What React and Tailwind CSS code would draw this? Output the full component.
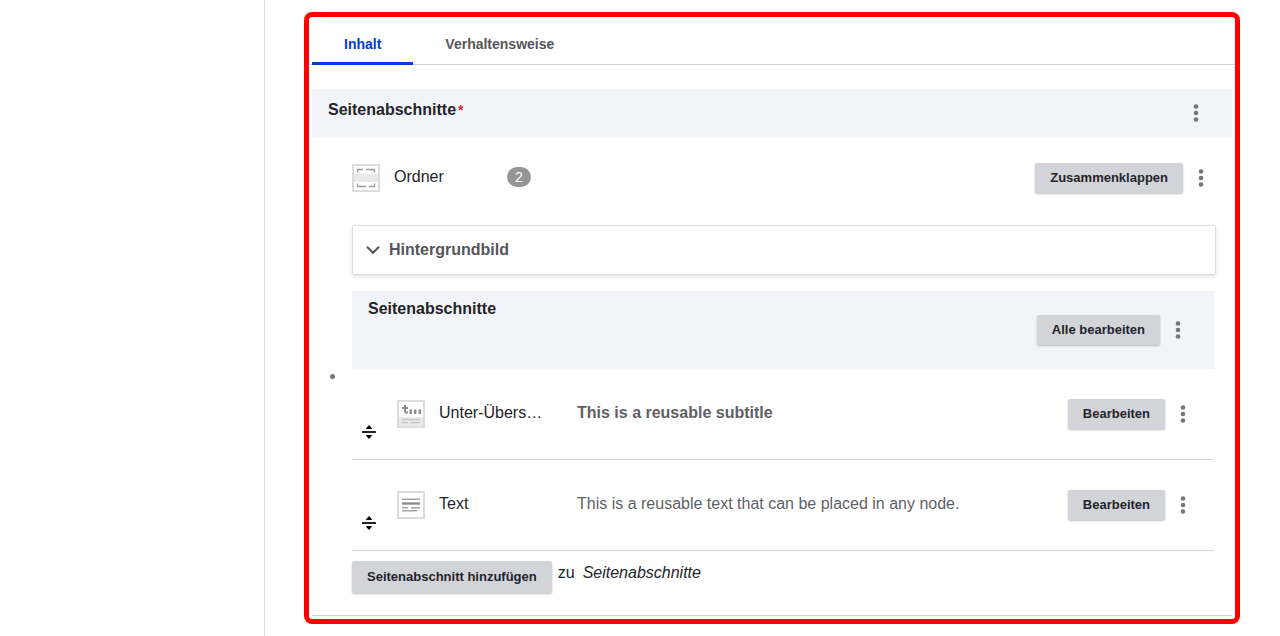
import React from "react";

function Kebab({ label }) {
  return (
    <button
      type="button"
      aria-label={label}
      className="flex h-8 w-9 shrink-0 items-center justify-center text-[#75757a]"
    >
      <svg width="6" height="20" viewBox="0 0 6 20" fill="currentColor">
        <circle cx="3" cy="3.5" r="2.3" />
        <circle cx="3" cy="10" r="2.3" />
        <circle cx="3" cy="16.5" r="2.3" />
      </svg>
    </button>
  );
}

function Button({ children }) {
  return (
    <button
      type="button"
      className="h-[30px] shrink-0 rounded-xs bg-[#d3d4d9] px-[15px] text-[13px] leading-4 font-bold text-[#232429] shadow-[0_1px_2px_rgba(0,0,0,0.25)]"
    >
      {children}
    </button>
  );
}

function FolderIcon() {
  return (
    <svg width="28" height="28" viewBox="0 0 28 28" className="shrink-0" fill="none">
      <rect x="1" y="1" width="26" height="26" fill="#fff" stroke="#dcdcdc" strokeWidth="2" />
      <rect x="2" y="10" width="24" height="8" fill="#e9e9e9" />
      <path
        d="M5.5 8.5V5.5H11M14 5.5H22.5V8.5M5.5 19.5V22.5H14M17 22.5H22.5V19.5"
        stroke="#9a9a9a"
        strokeWidth="1.3"
      />
    </svg>
  );
}

function SubtitleIcon() {
  return (
    <svg width="28" height="28" viewBox="0 0 28 28" className="shrink-0" fill="none">
      <rect x="1" y="1" width="26" height="26" fill="#fff" stroke="#dcdcdc" strokeWidth="2" />
      <rect x="2" y="17" width="24" height="9" fill="#e9e9e9" />
      <path d="M8 5V11.2Q8 12.5 9.5 12.5H11M5 8H11" stroke="#8c8c8c" strokeWidth="2" />
      <path d="M13.8 9.5V14M18.2 9.5V14M22.8 9.5V14" stroke="#8c8c8c" strokeWidth="2.4" />
      <path d="M5 19.6H23M5 22.6H11M14 22.6H23" stroke="#c4c4c4" strokeWidth="1.3" />
    </svg>
  );
}

function TextIcon() {
  return (
    <svg width="28" height="28" viewBox="0 0 28 28" className="shrink-0" fill="none">
      <rect x="1" y="1" width="26" height="26" fill="#fff" stroke="#dcdcdc" strokeWidth="2" />
      <path d="M5 8.2H23M5 16.8H11M14 16.8H23M5 19.8H20" stroke="#a3a3a3" strokeWidth="1.4" />
      <path d="M5 12.5H23" stroke="#8c8c8c" strokeWidth="2.4" />
    </svg>
  );
}

function DragHandle() {
  return (
    <a href="#drag" aria-label="Verschieben" className="mt-14 ml-[10px] block w-[14px] shrink-0">
      <svg width="14" height="14" viewBox="0 0 14 14">
        <path d="M0.5 7H13.5" stroke="#222" strokeWidth="1.8" strokeLinecap="round" />
        <path d="M4 3.4L6.3 0.7Q7 0 7.7 0.7L10 3.4Q10 4 9.4 4H4.6Q4 4 4 3.4Z" />
        <path d="M4 10.6L6.3 13.3Q7 14 7.7 13.3L10 10.6Q10 10 9.4 10H4.6Q4 10 4 10.6Z" />
      </svg>
    </a>
  );
}

function ParagraphRow({ icon, title, summary, bold }) {
  return (
    <li className="mr-[18px] flex h-[91px] items-start border-b border-[#d3d4d9]">
      <DragHandle />
      <div className="flex min-w-0 flex-1 items-center pt-[29px] pr-[13px] pl-[21px]">
        {icon}
        <span className="ml-[14px] w-[138px] shrink-0 pb-[2px]">{title}</span>
        <span
          className={
            bold
              ? "min-w-0 flex-1 truncate pb-[2px] font-bold text-[#5f5f66]"
              : "min-w-0 flex-1 truncate pb-[2px] text-[#5f5f66]"
          }
        >
          {summary}
        </span>
        <Button>Bearbeiten</Button>
        <Kebab label="Weitere Aktionen" />
      </div>
    </li>
  );
}

export default function App() {
  return (
    <div className="flex min-h-screen bg-white font-['Liberation_Sans',Arial,sans-serif] text-base leading-6 text-[#232429]">
      <aside className="w-[265px] shrink-0 border-r border-[#d9dbe8]" />
      <main className="min-w-0 flex-1 py-3 pr-10 pl-[39px]">
        <div className="rounded-lg border-5 border-[#ff0000]">
          <nav className="flex h-12 border-b border-[#d3d4d9] pl-[3px] text-sm font-bold">
            <a
              href="#inhalt"
              className="-mb-px flex items-center border-b-3 border-[#003ecc] px-8 pt-2 text-[#003ecc]"
            >
              Inhalt
            </a>
            <a href="#verhaltensweise" className="flex items-center px-8 pt-[6px] text-[#55565b]">
              Verhaltensweise
            </a>
          </nav>

          <section className="mx-[3px] mt-6 mb-[3px] border-b border-[#d3d4d9]">
            <header className="flex h-12 items-center justify-between bg-[#f3f4f9] pr-[18px] pl-4">
              <h4 className="pb-[6px] font-bold">
                Seitenabschnitte
                <span className="ml-[2px] text-sm text-[#dc2323]">*</span>
              </h4>
              <Kebab label="Aktionen" />
            </header>

            <div className="flex items-center">
              <div className="flex w-10 shrink-0 justify-center">
                <span className="size-[5px] rounded-full bg-[#75757a]" />
              </div>
              <div className="min-w-0 flex-1">
                <div className="flex h-[88px] items-center pr-[13px] pb-[6px]">
                  <FolderIcon />
                  <span className="ml-[14px] w-[113px] shrink-0 pb-[2px]">Ordner</span>
                  <span className="mb-[2px] rounded-full bg-[#969696] px-2 text-center text-sm leading-5 text-white">
                    2
                  </span>
                  <div className="ml-auto flex items-center">
                    <Button>Zusammenklappen</Button>
                    <Kebab label="Weitere Aktionen" />
                  </div>
                </div>

                <details className="mr-4 rounded-xs border border-[#dcdde3] shadow-[0_2px_4px_rgba(0,0,0,0.1)]">
                  <summary className="flex h-12 list-none items-center gap-[9px] pl-[13px] font-bold text-[#55565b]">
                    <svg width="14" height="10" viewBox="0 0 14 10" fill="none">
                      <path d="M1 1.8L7 7.8L13 1.8" stroke="currentColor" strokeWidth="2" />
                    </svg>
                    Hintergrundbild
                  </summary>
                </details>

                <header className="mt-4 mr-[18px] flex h-[78px] items-center justify-between bg-[#f3f4f9] pr-[18px] pl-4">
                  <h4 className="self-start pt-[6px] font-bold">Seitenabschnitte</h4>
                  <div className="flex items-center">
                    <Button>Alle bearbeiten</Button>
                    <Kebab label="Aktionen" />
                  </div>
                </header>

                <ul>
                  <ParagraphRow
                    icon={<SubtitleIcon />}
                    title="Unter-Übers…"
                    summary="This is a reusable subtitle"
                    bold
                  />
                  <ParagraphRow
                    icon={<TextIcon />}
                    title="Text"
                    summary="This is a reusable text that can be placed in any node."
                  />
                </ul>

                <div className="flex h-16 items-start pt-[10px]">
                  <button
                    type="button"
                    className="h-8 rounded-xs bg-[#d3d4d9] px-[15px] text-[13px] leading-4 font-bold text-[#232429] shadow-[0_1px_2px_rgba(0,0,0,0.25)]"
                  >
                    Seitenabschnitt hinzufügen
                  </button>
                  <span className="ml-[6px]">zu</span>
                  <em className="ml-2">Seitenabschnitte</em>
                </div>
              </div>
            </div>
          </section>
        </div>
      </main>
    </div>
  );
}
